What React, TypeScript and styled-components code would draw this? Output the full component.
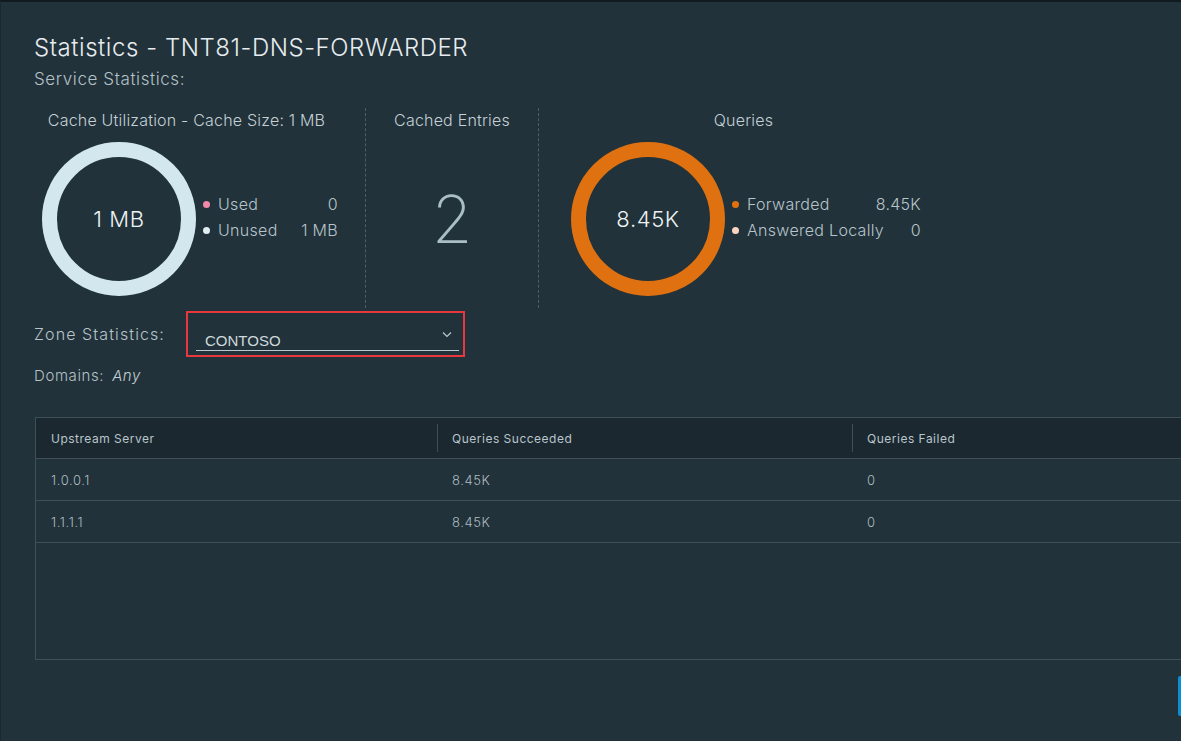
import React from "react";
import styled, { createGlobalStyle } from "styled-components";

const Global = createGlobalStyle`
  html, body { margin: 0; padding: 0; background: #21323a; overflow: hidden; }
  body { font-family: Inter, Lato, "Noto Sans", sans-serif; }
`;

const Page = styled.div`
  width: 1181px;
  height: 741px;
  box-sizing: border-box;
  border-top: 2px solid #111a1f;
  border-left: 1px solid #1b292f;
  background: #21323a;
  padding: 31px 0 0 33px;
  overflow: hidden;
  display: flex;
  flex-direction: column;
`;

const Title = styled.h1`
  margin: 0;
  font-size: 24px;
  line-height: 30px;
  font-weight: 300;
  letter-spacing: 0.55px;
  color: #e6ecef;
`;

const Subtitle = styled.div`
  font-size: 17px;
  line-height: 22px;
  font-weight: 300;
  letter-spacing: 0.6px;
  color: #b4c1c7;
  margin-top: 5px;
`;

const StatsRow = styled.div`
  display: flex;
  height: 200px;
  margin-top: 18px;
`;

const Column = styled.div<{ $width: number; $divider?: boolean; $padRight?: number }>`
  width: ${(p) => p.$width}px;
  box-sizing: border-box;
  padding-right: ${(p) => p.$padRight ?? 0}px;
  border-left: ${(p) => (p.$divider ? "1px dashed #4d5f67" : "none")};
  display: flex;
  flex-direction: column;
`;

const ColumnTitle = styled.div`
  font-size: 16px;
  line-height: 20px;
  font-weight: 300;
  letter-spacing: 0.2px;
  color: #c4d0d5;
  text-align: center;
  margin-top: 2px;
`;

const ChartRow = styled.div<{ $left: number }>`
  display: flex;
  align-items: center;
  margin-top: 12px;
  padding-left: ${(p) => p.$left}px;
`;

const DonutWrap = styled.div`
  position: relative;
  width: 154px;
  height: 154px;
  flex: none;
`;

const DonutLabel = styled.div`
  position: absolute;
  inset: 0;
  display: flex;
  align-items: center;
  justify-content: center;
  font-size: 22px;
  font-weight: 300;
  letter-spacing: 0.6px;
  color: #eef2f4;
`;

const Legend = styled.div<{ $width: number }>`
  width: ${(p) => p.$width}px;
  margin-left: 6px;
  display: flex;
  flex-direction: column;
  gap: 6px;
  margin-top: -4px;
`;

const LegendItem = styled.div`
  display: flex;
  align-items: center;
  font-size: 16px;
  font-weight: 300;
  letter-spacing: 0.3px;
  line-height: 20px;
  color: #b7c4ca;
`;

const Dot = styled.span<{ $color: string }>`
  width: 7px;
  height: 7px;
  border-radius: 50%;
  background: ${(p) => p.$color};
  margin: 0 8px 0 1px;
  flex: none;
`;

const LegendValue = styled.span`
  margin-left: auto;
`;

const BigNumber = styled.div`
  flex: 1;
  display: flex;
  align-items: center;
  justify-content: center;
  font-size: 66px;
  font-weight: 200;
  color: #a9bec5;
  padding-bottom: 0px;
`;

const ZoneRow = styled.div`
  display: flex;
  align-items: center;
  margin-top: 3px;
`;

const ZoneLabel = styled.div`
  width: 152px;
  font-size: 16px;
  font-weight: 300;
  letter-spacing: 1.1px;
  color: #b7c4ca;
`;

const Highlight = styled.div`
  width: 279px;
  height: 46px;
  box-sizing: border-box;
  border: 2px solid #e8383d;
  padding: 9px 4px 0 8px;
`;

const Select = styled.div`
  height: 29px;
  box-sizing: border-box;
  border-bottom: 1px solid #b9c8ce;
  display: flex;
  align-items: flex-end;
  padding: 0 6px 0 9px;
  position: relative;
`;

const SelectText = styled.span`
  font-family: "Liberation Sans", Arial, sans-serif;
  font-size: 15px;
  color: #cfd9dd;
  line-height: 18px;
`;

const Chevron = styled.svg`
  position: absolute;
  right: 7px;
  top: 9px;
`;

const Domains = styled.div`
  font-size: 15px;
  font-weight: 300;
  letter-spacing: 0.6px;
  color: #b4c1c7;
  margin-top: 9px;
`;

const Italic = styled.em`
  margin-left: 8px;
  font-style: italic;
  color: #c4d0d5;
`;

const Table = styled.div`
  width: 1200px;
  margin-top: 32px;
  margin-left: 1px;
  height: 243px;
  box-sizing: border-box;
  border: 1px solid #3e4f57;
  border-right: none;
  display: flex;
  flex-direction: column;
`;

const Row = styled.div<{ $header?: boolean }>`
  display: grid;
  grid-template-columns: 401px 415px 1fr;
  height: ${(p) => (p.$header ? 40 : 41)}px;
  background: ${(p) => (p.$header ? "#1c2830" : "transparent")};
  border-bottom: 1px solid #3e4f57;
  align-items: center;
  flex: none;
`;

const Cell = styled.div<{ $header?: boolean; $sep?: boolean }>`
  height: ${(p) => (p.$header ? 28 : 20)}px;
  display: flex;
  align-items: center;
  padding-left: ${(p) => (p.$sep ? 14 : 15)}px;
  border-left: ${(p) => (p.$sep ? "1px solid #3e4f57" : "none")};
  font-size: ${(p) => (p.$header ? 12 : 13)}px;
  letter-spacing: ${(p) => (p.$header ? 0.5 : 0.6)}px;
  font-weight: ${(p) => (p.$header ? 400 : 300)};
  color: ${(p) => (p.$header ? "#b8c5cb" : "#aebbc1")};
`;

const Footer = styled.div`
  display: flex;
  justify-content: flex-end;
  margin-top: 16px;
`;

const EdgeButton = styled.div`
  width: 3px;
  height: 40px;
  background: #0b8ed4;
  border-radius: 2px 0 0 2px;
`;

function Donut({ color, label }: { color: string; label: string }) {
  return (
    <DonutWrap>
      <svg width="154" height="154" viewBox="0 0 154 154">
        <circle cx="77" cy="77" r="69.5" fill="none" stroke={color} strokeWidth="15" />
      </svg>
      <DonutLabel>{label}</DonutLabel>
    </DonutWrap>
  );
}

const rows = [
  ["1.0.0.1", "8.45K", "0"],
  ["1.1.1.1", "8.45K", "0"],
];

export default function App() {
  return (
    <>
      <Global />
      <Page>
        <Title>Statistics - TNT81-DNS-FORWARDER</Title>
        <Subtitle>Service Statistics:</Subtitle>
        <StatsRow>
          <Column $width={331} $padRight={26}>
            <ColumnTitle>Cache Utilization - Cache Size: 1 MB</ColumnTitle>
            <ChartRow $left={8}>
              <Donut color="#d2e8ee" label="1 MB" />
              <Legend $width={136}>
                <LegendItem>
                  <Dot $color="#f08aa8" />
                  Used
                  <LegendValue>0</LegendValue>
                </LegendItem>
                <LegendItem>
                  <Dot $color="#e0eef2" />
                  Unused
                  <LegendValue>1 MB</LegendValue>
                </LegendItem>
              </Legend>
            </ChartRow>
          </Column>
          <Column $width={173} $divider>
            <ColumnTitle>Cached Entries</ColumnTitle>
            <BigNumber>2</BigNumber>
          </Column>
          <Column $width={410} $divider>
            <ColumnTitle>Queries</ColumnTitle>
            <ChartRow $left={32}>
              <Donut color="#e07110" label="8.45K" />
              <Legend $width={190}>
                <LegendItem>
                  <Dot $color="#e2700f" />
                  Forwarded
                  <LegendValue>8.45K</LegendValue>
                </LegendItem>
                <LegendItem>
                  <Dot $color="#fad4c2" />
                  Answered Locally
                  <LegendValue>0</LegendValue>
                </LegendItem>
              </Legend>
            </ChartRow>
          </Column>
        </StatsRow>
        <ZoneRow>
          <ZoneLabel>Zone Statistics:</ZoneLabel>
          <Highlight>
            <Select>
              <SelectText>CONTOSO</SelectText>
              <Chevron width="10" height="7" viewBox="0 0 10 7">
                <path d="M1 1.5 L5 5.5 L9 1.5" fill="none" stroke="#b9c8ce" strokeWidth="1.2" />
              </Chevron>
            </Select>
          </Highlight>
        </ZoneRow>
        <Domains>
          Domains:<Italic>Any</Italic>
        </Domains>
        <Table>
          <Row $header>
            <Cell $header>Upstream Server</Cell>
            <Cell $header $sep>Queries Succeeded</Cell>
            <Cell $header $sep>Queries Failed</Cell>
          </Row>
          {rows.map((r) => (
            <Row key={r[0]}>
              <Cell>{r[0]}</Cell>
              <Cell>{r[1]}</Cell>
              <Cell>{r[2]}</Cell>
            </Row>
          ))}
        </Table>
        <Footer>
          <EdgeButton />
        </Footer>
      </Page>
    </>
  );
}
